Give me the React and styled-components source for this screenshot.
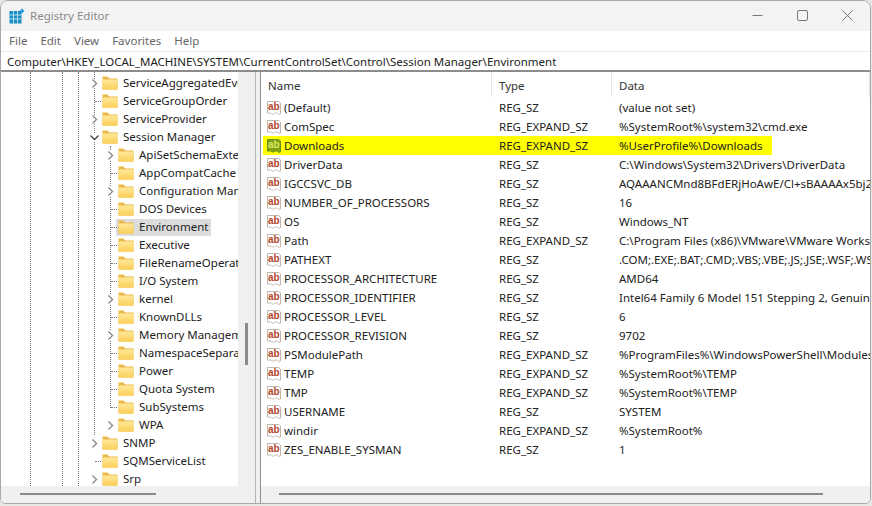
import React from "react";
import styled, { createGlobalStyle } from "styled-components";

const Global = createGlobalStyle`
  html, body { margin: 0; padding: 0; background: #e9e7e4; }
  #root { width: 872px; height: 506px; overflow: hidden; }
`;

const Windowed = styled.div`
  width: 871px; height: 504px; box-sizing: border-box;
  display: flex; flex-direction: column; overflow: hidden;
  background: #f0f0f0; border: 1px solid #a8a8a8; border-radius: 8px 8px 6px 6px;
  font-family: "Noto Sans", "Open Sans", sans-serif; font-size: 11.5px; color: #222;
`;
const TitleBar = styled.div`
  height: 30px; box-sizing: border-box; padding: 0 0 1px 8px; flex: none; display: flex; align-items: center; background: #f3f3f3;
  gap: 5px; color: #8a8a8a;
`;
const TitleText = styled.span` flex: 1; `;
const Controls = styled.div` display: flex; align-items: center; gap: 34px; padding-right: 17px; `;
const MenuBar = styled.div`
  height: 20px; box-sizing: border-box; padding: 0 0 1px 8px; flex: none; display: flex; align-items: center; gap: 13px;
  background: #fff; color: #666;
`;
const Address = styled.div`
  height: 21px; flex: none; display: flex; align-items: center; padding-left: 6px; box-sizing: border-box;
  background: #fff; border-top: 1px solid #ececec; border-bottom: 2px solid #8c8c8c; white-space: nowrap;
`;
const Panes = styled.div` flex: 1; min-height: 0; display: flex; background: #f0f0f0; `;
const TreePane = styled.div`
  width: 254px; flex: none; display: grid; grid-template-columns: 1fr 17px; grid-template-rows: 1fr 17px;
`;
const TreeBody = styled.div`
  position: relative; overflow: hidden; background: #fff; padding-top: 2px;
`;
const Guide = styled.i`
  position: absolute; left: ${p => p.$x}px; top: ${p => p.$top}px; height: ${p => p.$h}px;
  border-left: 1px dotted #777;
`;
const Row = styled.div`
  height: 18px; display: flex; align-items: center; padding-left: ${p => p.$indent}px; white-space: nowrap;
  position: relative;
`;
const Twist = styled.span`
  width: 9px; height: 9px; flex: none; display: flex; margin-right: 3px;
  background: ${p => (p.$filled ? "#fff" : "transparent")};
`;
const Stub = styled.i`
  position: absolute; left: ${p => p.$indent + 5}px; width: 6px; border-top: 1px dotted #777;
`;
const Entry = styled.span`
  display: flex; align-items: center; height: 17px; margin-left: -2px; padding-left: 2px;
  background: ${p => (p.$selected ? "#dcdcdc" : "transparent")};
`;
const Label = styled.span`
  margin-left: 2px; padding: 0 3px; line-height: 18px;
`;
const VTrack = styled.div` background: #f0f0f0; position: relative; `;
const VThumb = styled.i` position: absolute; left: 7px; top: 251px; width: 3px; height: 42px; background: #8a8a8a; `;
const HTrack = styled.div` background: #f0f0f0; position: relative; height: 17px; flex: none; `;
const HThumb = styled.i`
  position: absolute; top: 7px; left: ${p => p.$left}px; width: ${p => p.$width}px; height: 2px; background: #8a8a8a;
`;
const Corner = styled.div` background: #f0f0f0; `;
const Splitter = styled.div` width: 6px; flex: none; background: #f0f0f0; border-right: 1px solid #8f8f8f; border-left: 1px solid #b5b5b5; box-sizing: border-box; `;
const ListPane = styled.div` flex: 1; min-width: 0; display: flex; flex-direction: column; `;
const ListBody = styled.div` flex: 1; background: #fff; overflow: hidden; padding-left: 2px; `;
const Header = styled.div`
  height: 25px; margin-bottom: 1px; display: grid; grid-template-columns: 229px 120px 1fr; color: #333;
`;
const HeadCell = styled.div`
  padding-left: ${p => p.$pad}px; height: 25px; line-height: 28px; border-right: 1px solid #e5e5e5;
`;
const ValueRow = styled.div`
  height: 19px; display: grid; grid-template-columns: 229px 120px 1fr; align-items: center; white-space: nowrap;
  background: ${p => (p.$hl ? "#ffff00" : "transparent")};
  width: ${p => (p.$hl ? "509px" : "auto")};
`;
const NameCell = styled.div` display: flex; align-items: center; gap: 2px; padding-left: 3px; overflow: hidden; `;
const TypeCell = styled.div` padding-left: 7px; `;
const DataCell = styled.div` padding-left: 7px; overflow: hidden; `;

const Folder = () => (
  <svg width="16" height="16" viewBox="0 0 16 16" style={{ flex: "none" }}>
    <defs>
      <linearGradient id="fg" x1="0" y1="0" x2="0" y2="1">
        <stop offset="0" stopColor="#ffe89a" />
        <stop offset="1" stopColor="#fbcf58" />
      </linearGradient>
    </defs>
    <path d="M0.5 1.5h5l2 2h8v11h-15z" fill="#e9b949" />
    <rect x="0.5" y="4.5" width="15" height="10" fill="url(#fg)" />
  </svg>
);
const Chevron = ({ open }) => (
  <svg width="9" height="9" viewBox="0 0 9 9">
    <path d={open ? "M0.5 2.5L4.5 6.5L8.5 2.5" : "M2.5 0.5L6.5 4.5L2.5 8.5"} fill="none" stroke={open ? "#444" : "#8a8a8a"} strokeWidth="1.4" />
  </svg>
);
const AbIcon = ({ hl }) => (
  <svg width="16" height="16" viewBox="0 0 16 16" style={{ flex: "none" }}>
    <path d="M1.5 1.5h11l2 1.5v11c-2 1-2.5-0.5-4-1s-2.5 1.5-4 1-2.5-1.5-3.5-1-1 0.5-1.5 0z" fill={hl ? "#7f9f14" : "#fff"} stroke={hl ? "#6f8f10" : "#c4b5ab"} />
    <text x="7.8" y="10.2" textAnchor="middle" fontFamily="Liberation Sans, sans-serif" fontWeight="700" fontSize="10" fill={hl ? "#d8e860" : "#b5452c"}>ab</text>
  </svg>
);
const AppIcon = () => (
  <svg width="16" height="16" viewBox="0 0 16 16" style={{ flex: "none" }}>
    <rect x="0.5" y="3" width="12" height="12.5" fill="#1b8fc4" />
    <path d="M4.5 3v12.5M8.5 3v12.5M0.5 7h12M0.5 11h12" stroke="#d8eef8" strokeWidth="0.8" />
    <path d="M13 0.5l2.5 2.5-2.5 2.5-2.5-2.5z" fill="#2a9fd6" />
  </svg>
);

const tree = [
  [1, "ServiceAggregatedEvents", "c"],
  [1, "ServiceGroupOrder", ""],
  [1, "ServiceProvider", "c"],
  [1, "Session Manager", "o"],
  [2, "ApiSetSchemaExtensions", "c"],
  [2, "AppCompatCache", ""],
  [2, "Configuration Manager", "c"],
  [2, "DOS Devices", ""],
  [2, "Environment", "", true],
  [2, "Executive", ""],
  [2, "FileRenameOperations", ""],
  [2, "I/O System", ""],
  [2, "kernel", "c"],
  [2, "KnownDLLs", ""],
  [2, "Memory Management", "c"],
  [2, "NamespaceSeparation", ""],
  [2, "Power", ""],
  [2, "Quota System", ""],
  [2, "SubSystems", ""],
  [2, "WPA", "c"],
  [1, "SNMP", "c"],
  [1, "SQMServiceList", ""],
  [1, "Srp", "c"],
];
const values = [
  ["(Default)", "REG_SZ", "(value not set)"],
  ["ComSpec", "REG_EXPAND_SZ", "%SystemRoot%\\system32\\cmd.exe"],
  ["Downloads", "REG_EXPAND_SZ", "%UserProfile%\\Downloads", true],
  ["DriverData", "REG_SZ", "C:\\Windows\\System32\\Drivers\\DriverData"],
  ["IGCCSVC_DB", "REG_SZ", "AQAAANCMnd8BFdERjHoAwE/Cl+sBAAAAx5bj2kqLm0uT3vYc"],
  ["NUMBER_OF_PROCESSORS", "REG_SZ", "16"],
  ["OS", "REG_SZ", "Windows_NT"],
  ["Path", "REG_EXPAND_SZ", "C:\\Program Files (x86)\\VMware\\VMware Workstation\\bin"],
  ["PATHEXT", "REG_SZ", ".COM;.EXE;.BAT;.CMD;.VBS;.VBE;.JS;.JSE;.WSF;.WSH;.MSC"],
  ["PROCESSOR_ARCHITECTURE", "REG_SZ", "AMD64"],
  ["PROCESSOR_IDENTIFIER", "REG_SZ", "Intel64 Family 6 Model 151 Stepping 2, GenuineIntel"],
  ["PROCESSOR_LEVEL", "REG_SZ", "6"],
  ["PROCESSOR_REVISION", "REG_SZ", "9702"],
  ["PSModulePath", "REG_EXPAND_SZ", "%ProgramFiles%\\WindowsPowerShell\\Modules;%SystemRoot%"],
  ["TEMP", "REG_EXPAND_SZ", "%SystemRoot%\\TEMP"],
  ["TMP", "REG_EXPAND_SZ", "%SystemRoot%\\TEMP"],
  ["USERNAME", "REG_SZ", "SYSTEM"],
  ["windir", "REG_EXPAND_SZ", "%SystemRoot%"],
  ["ZES_ENABLE_SYSMAN", "REG_SZ", "1"],
];

export default function App() {
  return (
    <>
      <Global />
      <Windowed>
        <TitleBar>
          <AppIcon />
          <TitleText>Registry Editor</TitleText>
          <Controls>
            <svg width="11" height="11" viewBox="0 0 11 11"><path d="M0.5 5.5h10" stroke="#777" /></svg>
            <svg width="11" height="11" viewBox="0 0 11 11"><rect x="0.5" y="0.5" width="10" height="10" rx="1.5" fill="none" stroke="#777" /></svg>
            <svg width="11" height="11" viewBox="0 0 11 11"><path d="M0.5 0.5l10 10M10.5 0.5l-10 10" stroke="#777" /></svg>
          </Controls>
        </TitleBar>
        <MenuBar>
          <span>File</span><span>Edit</span><span>View</span><span>Favorites</span><span>Help</span>
        </MenuBar>
        <Address>Computer\HKEY_LOCAL_MACHINE\SYSTEM\CurrentControlSet\Control\Session Manager\Environment</Address>
        <Panes>
          <TreePane>
            <TreeBody>
              <Guide $x={29} $top={0} $h={414} />
              <Guide $x={61} $top={0} $h={414} />
              <Guide $x={77} $top={0} $h={414} />
              <Guide $x={93} $top={0} $h={363} />
              <Guide $x={109} $top={74} $h={262} />
              {tree.map(([lvl, name, tw, sel]) => {
                const indent = lvl === 1 ? 89 : 105;
                return (
                  <Row key={name} $indent={indent}>
                    {tw ? null : <Stub $indent={indent} />}
                    <Twist $filled={!!tw}>{tw ? <Chevron open={tw === "o"} /> : null}</Twist>
                    <Entry $selected={sel}>
                      <Folder />
                      <Label>{name}</Label>
                    </Entry>
                  </Row>
                );
              })}
            </TreeBody>
            <VTrack><VThumb /></VTrack>
            <HTrack><HThumb $left={19} $width={136} /></HTrack>
            <Corner />
          </TreePane>
          <Splitter />
          <ListPane>
            <ListBody>
              <Header>
                <HeadCell $pad={5}>Name</HeadCell>
                <HeadCell $pad={7}>Type</HeadCell>
                <HeadCell $pad={7}>Data</HeadCell>
              </Header>
              {values.map(([n, t, d, hl]) => (
                <ValueRow key={n} $hl={hl}>
                  <NameCell><AbIcon hl={hl} />{n}</NameCell>
                  <TypeCell>{t}</TypeCell>
                  <DataCell>{d}</DataCell>
                </ValueRow>
              ))}
            </ListBody>
            <HTrack><HThumb $left={18} $width={544} /></HTrack>
          </ListPane>
        </Panes>
      </Windowed>
    </>
  );
}
